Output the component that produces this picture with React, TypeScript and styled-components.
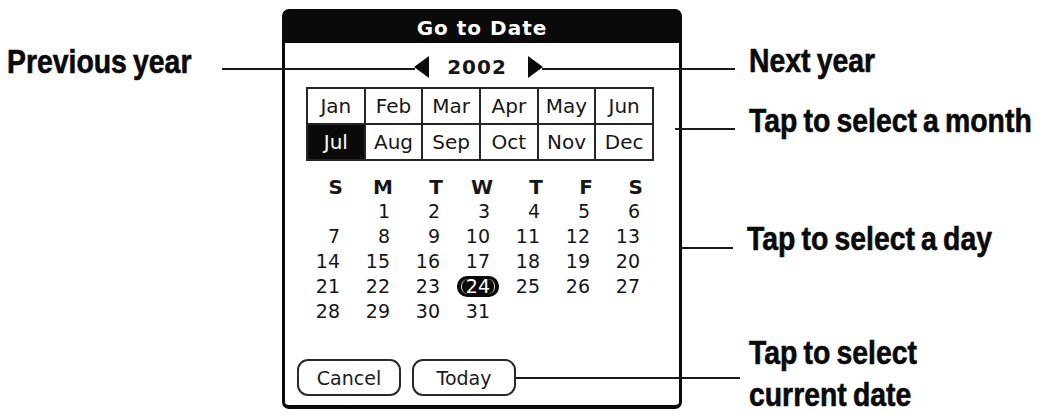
import styled, { createGlobalStyle } from 'styled-components'

const GlobalStyle = createGlobalStyle`
  html, body {
    margin: 0;
    padding: 0;
    background: #ffffff;
    overflow: hidden;
  }
`

const Page = styled.div`
  display: flex;
  align-items: flex-start;
  width: 1039px;
  height: 415px;
  background: #ffffff;
`

const SideColumn = styled.div<{ $width: number; $paddingTop: number; $paddingLeft?: number }>`
  position: relative;
  z-index: 1;
  display: flex;
  flex-direction: column;
  flex: 0 0 auto;
  width: ${(p) => p.$width}px;
  padding-top: ${(p) => p.$paddingTop}px;
  padding-left: ${(p) => p.$paddingLeft || 0}px;
  box-sizing: border-box;
`

const Callout = styled.div<{ $marginTop?: number }>`
  display: flex;
  align-items: flex-start;
  margin-top: ${(p) => p.$marginTop || 0}px;
`

const Leader = styled.span<{ $top: number; $width: number; $ml: string; $mr: string }>`
  flex: 0 0 auto;
  width: ${(p) => p.$width}px;
  height: 2px;
  background: #1a1a1a;
  margin-top: ${(p) => p.$top}px;
  margin-left: ${(p) => p.$ml};
  margin-right: ${(p) => p.$mr};
`

const Label = styled.span`
  display: inline-block;
  flex: 0 1 auto;
  min-width: 0;
  font-family: 'Liberation Sans', Arial, sans-serif;
  font-weight: 700;
  font-size: 33px;
  line-height: 42px;
  color: #0a0a0a;
  white-space: nowrap;
  word-spacing: -2px;
  -webkit-text-stroke: 0.6px #0a0a0a;
  transform: scaleX(0.86);
  transform-origin: left top;
`

const Dialog = styled.div`
  display: flex;
  flex-direction: column;
  flex: 0 0 auto;
  width: 400px;
  height: 400px;
  margin-top: 9px;
  box-sizing: border-box;
  border: 3px solid #0a0a0a;
  border-bottom-width: 4px;
  border-radius: 7px;
  padding-bottom: 9px;
  background: #ffffff;
  font-family: 'DejaVu Sans', Verdana, sans-serif;
  color: #161616;
`

const TitleBar = styled.div`
  height: 32px;
  margin: -1px -1px 0;
  border-radius: 4px 4px 0 0;
  background: #0a0a0a;
  color: #ffffff;
  font-weight: 700;
  font-size: 20px;
  letter-spacing: 1px;
  line-height: 34px;
  text-align: center;
`

const YearRow = styled.div`
  display: flex;
  align-items: center;
  justify-content: center;
  height: 38px;
  margin-top: 5px;
  padding-right: 7px;
`

const YearText = styled.span`
  font-weight: 700;
  font-size: 20px;
  letter-spacing: 1px;
  margin: 0 21px 0 18px;
`

const MonthGrid = styled.div`
  display: grid;
  grid-template-columns: repeat(6, 1fr);
  grid-auto-rows: 34px;
  gap: 2px;
  padding: 2px;
  width: 348px;
  box-sizing: border-box;
  margin: 1px 0 0 21px;
  background: #262626;
`

const MonthCell = styled.div<{ $selected?: boolean }>`
  display: flex;
  align-items: center;
  justify-content: center;
  font-size: 20px;
  background: ${(p) => (p.$selected ? '#0a0a0a' : '#ffffff')};
  color: ${(p) => (p.$selected ? '#ffffff' : '#161616')};
`

const DayGrid = styled.div`
  display: grid;
  grid-template-columns: repeat(7, 50px);
  grid-template-rows: 24px repeat(5, 25px);
  margin: 14px 0 0 5px;
`

const WeekDay = styled.div`
  text-align: right;
  font-weight: 700;
  font-size: 20px;
  line-height: 24px;
  margin-right: -3px;
`

const DayCell = styled.div`
  text-align: right;
  font-size: 19px;
  line-height: 25px;
`

const SelectedDay = styled.span`
  position: relative;
  display: inline-block;
  background: #0a0a0a;
  color: #ffffff;
  border-radius: 10px;
  padding: 0 9px;
  margin: 0 -9px;
  line-height: 21px;

  &::before {
    content: '';
    position: absolute;
    top: 3px;
    bottom: 3px;
    left: 4px;
    right: 4px;
    border-left: 1.5px solid #d8d8d8;
    border-right: 1.5px solid #d8d8d8;
    border-radius: 7px;
  }
`

const ButtonRow = styled.div`
  display: flex;
  gap: 11px;
  margin-top: auto;
  padding-left: 12px;
`

const Button = styled.div`
  width: 104px;
  height: 37px;
  box-sizing: border-box;
  border: 2px solid #2a2a2a;
  border-radius: 11px;
  display: flex;
  align-items: center;
  justify-content: center;
  font-size: 19px;
  color: #1c1c1c;
`

const Arrow = ({ dir }: { dir: 'left' | 'right' }) => (
  <svg width="15" height="22" viewBox="0 0 15 22">
    <polygon
      points={dir === 'left' ? '15,0 15,22 0,11' : '0,0 0,22 15,11'}
      fill="#0a0a0a"
    />
  </svg>
)

const months = ['Jan', 'Feb', 'Mar', 'Apr', 'May', 'Jun', 'Jul', 'Aug', 'Sep', 'Oct', 'Nov', 'Dec']
const weekDays = ['S', 'M', 'T', 'W', 'T', 'F', 'S']

// July 2002 starts on a Monday
const days: (number | null)[] = [null, ...Array.from({ length: 31 }, (_, i) => i + 1)]

const App = () => {
  return (
    <>
      <GlobalStyle />
      <Page>
        <SideColumn $width={282} $paddingTop={41} $paddingLeft={7}>
          <Callout>
            <Label>Previous year</Label>
            <Leader $top={27} $width={193} $ml="auto" $mr="-133px" />
          </Callout>
        </SideColumn>

        <Dialog>
          <TitleBar>Go to Date</TitleBar>
          <YearRow>
            <Arrow dir="left" />
            <YearText>2002</YearText>
            <Arrow dir="right" />
          </YearRow>
          <MonthGrid>
            {months.map((m) => (
              <MonthCell key={m} $selected={m === 'Jul'}>
                {m}
              </MonthCell>
            ))}
          </MonthGrid>
          <DayGrid>
            {weekDays.map((d, i) => (
              <WeekDay key={i}>{d}</WeekDay>
            ))}
            {days.map((d, i) => (
              <DayCell key={i}>
                {d === 24 ? <SelectedDay>24</SelectedDay> : d}
              </DayCell>
            ))}
          </DayGrid>
          <ButtonRow>
            <Button>Cancel</Button>
            <Button>Today</Button>
          </ButtonRow>
        </Dialog>

        <SideColumn $width={357} $paddingTop={40}>
          <Callout>
            <Leader $top={28} $width={193} $ml="-140px" $mr="14px" />
            <Label>Next year</Label>
          </Callout>
          <Callout $marginTop={18}>
            <Leader $top={28} $width={60} $ml="-7px" $mr="14px" />
            <Label>Tap to select a month</Label>
          </Callout>
          <Callout $marginTop={76}>
            <Leader $top={29} $width={53} $ml="-2px" $mr="14px" />
            <Label>Tap to select a day</Label>
          </Callout>
          <Callout $marginTop={72}>
            <Leader $top={45} $width={224} $ml="-166px" $mr="9px" />
            <Label>
              Tap to select
              <br />
              current date
            </Label>
          </Callout>
        </SideColumn>
      </Page>
    </>
  )
}

export default App
